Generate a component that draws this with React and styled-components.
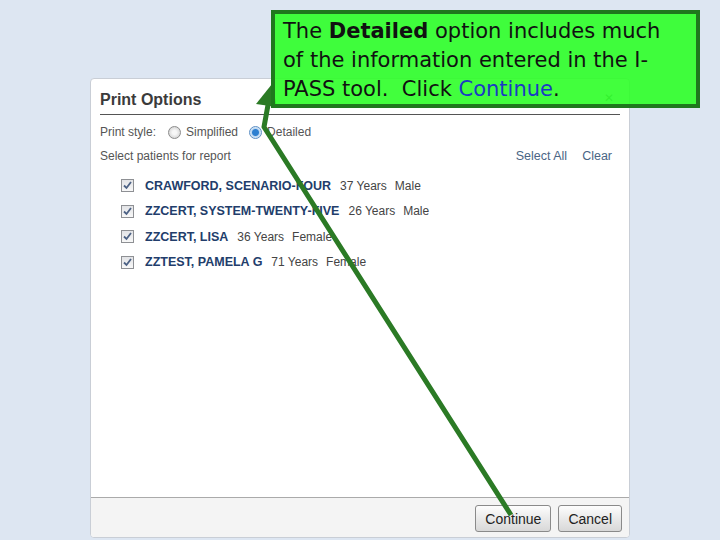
import styled, { createGlobalStyle } from "styled-components"

const patients = [
  { name: "CRAWFORD, SCENARIO-FOUR", age: "37 Years", sex: "Male" },
  { name: "ZZCERT, SYSTEM-TWENTY-FIVE", age: "26 Years", sex: "Male" },
  { name: "ZZCERT, LISA", age: "36 Years", sex: "Female" },
  { name: "ZZTEST, PAMELA G", age: "71 Years", sex: "Female" },
]

export default function App() {
  return (
    <Page>
      <GlobalStyle />
      <Dialog>
        <DialogBody>
          <Header>
            <Title>Print Options</Title>
            <Close>✕</Close>
          </Header>

          <OptionRow>
            <Label>Print style:</Label>
            <Radio />
            <Label>Simplified</Label>
            <Radio checked />
            <Label>Detailed</Label>
          </OptionRow>

          <SelectRow>
            <Label>Select patients for report</Label>
            <Links>
              <LinkText>Select All</LinkText>
              <LinkText>Clear</LinkText>
            </Links>
          </SelectRow>

          <List>
            {patients.map((p) => (
              <Patient key={p.name}>
                <Check>
                  <svg width="11" height="11" viewBox="0 0 11 11">
                    <path d="M2 5.5 L4.5 8 L9 2" fill="none" stroke="#4d6285" strokeWidth="1.8" />
                  </svg>
                </Check>
                <Name>{p.name}</Name>
                <Info>{p.age}</Info>
                <Info>{p.sex}</Info>
              </Patient>
            ))}
          </List>
        </DialogBody>

        <Footer>
          <Button>Continue</Button>
          <Button>Cancel</Button>
        </Footer>
      </Dialog>

      <Arrow width="720" height="540" viewBox="0 0 720 540">
        <polyline points="511,515 264,127 270,94" fill="none" stroke="#2b7a25" strokeWidth="5" strokeLinejoin="round" />
        <polygon points="272,84 256,104 277,107" fill="#2b7a25" />
      </Arrow>

      <Callout>
        The <b>Detailed</b> option includes much<br />
        of the information entered in the I-<br />
        PASS tool.&nbsp; Click <Blue>Continue</Blue>.
      </Callout>
    </Page>
  )
}

const GlobalStyle = createGlobalStyle`
  body {
    margin: 0;
    background: #dde6f2;
  }
`
const Page = styled.div`
  position: relative;
  width: 720px;
  height: 540px;
  overflow: hidden;
  padding: 78px 0 0 90px;
  box-sizing: border-box;
  font-family: "Liberation Sans", Arial, sans-serif;
`
const Dialog = styled.div`
  width: 540px;
  height: 460px;
  box-sizing: border-box;
  background: #fff;
  border: 1px solid #c9ced6;
  border-radius: 4px;
  display: flex;
  flex-direction: column;
  overflow: hidden;
`
const DialogBody = styled.div`
  flex: 1;
  padding: 0 9px 0 9px;
`
const Header = styled.div`
  height: 36px;
  padding-top: 12px;
  box-sizing: border-box;
  border-bottom: 1px solid #555;
  display: flex;
  justify-content: space-between;
`
const Title = styled.div`
  font-size: 16px;
  line-height: 18px;
  font-weight: bold;
  color: #3b3b3b;
`
const Close = styled.div`
  font-size: 12px;
  line-height: 12px;
  color: #6a6a6a;
  margin: 1px 6px 0 0;
`
const OptionRow = styled.div`
  display: flex;
  align-items: center;
  height: 22px;
  margin-top: 6px;
`
const Label = styled.span`
  font-size: 12px;
  color: #555;
`
const Radio = styled.span`
  width: 13px;
  height: 13px;
  box-sizing: border-box;
  border-radius: 50%;
  margin: 0 5px 0 ${(p) => (p.checked ? 11 : 12)}px;
  border: 1px solid ${(p) => (p.checked ? "#5d8fc4" : "#8c8c8c")};
  background: ${(p) =>
    p.checked
      ? "radial-gradient(circle, #2d7fd0 0 3px, #bcd7f1 4px, #e4eff9 6px)"
      : "radial-gradient(circle, #f7f7f7 0 2px, #d6d6d6 6px)"};
`
const SelectRow = styled.div`
  display: flex;
  justify-content: space-between;
  align-items: center;
  height: 22px;
  margin-top: 2px;
`
const Links = styled.div`
  display: flex;
  gap: 15px;
  padding-right: 8px;
`
const LinkText = styled.span`
  font-size: 12.5px;
  color: #4a6585;
`
const List = styled.div`
  padding: 6px 0 0 21px;
`
const Patient = styled.div`
  display: flex;
  align-items: center;
  height: 25.5px;
`
const Check = styled.span`
  width: 13px;
  height: 13px;
  box-sizing: border-box;
  border: 1px solid #8e9094;
  background: linear-gradient(#e2e3e6, #f8f8f8);
  display: flex;
  align-items: center;
  justify-content: center;
  margin-right: 11px;
`
const Name = styled.span`
  font-size: 12.5px;
  font-weight: bold;
  color: #223d6b;
  margin-right: 9px;
`
const Info = styled.span`
  font-size: 12px;
  color: #444;
  margin-right: 8px;
`
const Footer = styled.div`
  height: 40px;
  box-sizing: border-box;
  border-top: 1px solid #aaa;
  background: #f4f4f4;
  display: flex;
  justify-content: flex-end;
  gap: 7px;
  padding: 7px 7px 0 0;
`
const Button = styled.button`
  height: 27px;
  padding: 0 9px;
  font-family: "Liberation Sans", Arial, sans-serif;
  font-size: 14px;
  color: #222;
  border: 1px solid #8a8a8a;
  border-radius: 3px;
  background: linear-gradient(#fdfdfd, #e6e6e6 60%, #d8d8d8);
`
const Arrow = styled.svg`
  position: absolute;
  left: 0;
  top: 0;
  pointer-events: none;
`
const Callout = styled.div`
  position: absolute;
  left: 271px;
  top: 10px;
  width: 429px;
  height: 98px;
  box-sizing: border-box;
  border: 4px solid #1f781d;
  background: rgba(45, 255, 40, 0.9);
  padding: 3px 0 0 8px;
  font-family: "DejaVu Sans", sans-serif;
  font-size: 21px;
  line-height: 29px;
  color: #111;
  white-space: nowrap;
  overflow: hidden;
`
const Blue = styled.span`
  color: #1a3bc4;
`
